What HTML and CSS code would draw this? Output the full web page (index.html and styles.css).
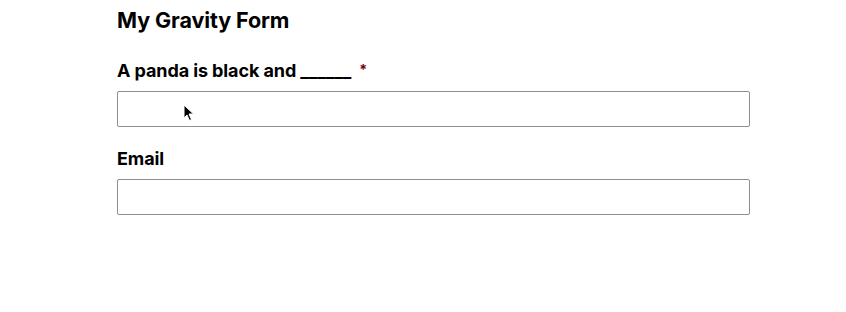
FILE: index.html
```html
<!DOCTYPE html>
<html>
<head>
<meta charset="utf-8">
<link rel="stylesheet" href="styles.css">
</head>
<body>
<div class="page">
  <form class="gform">
    <h2 class="gform-title">My Gravity Form</h2>
    <div class="field">
      <label class="field-label">A panda is black and ______ <span class="req">*</span></label>
      <div class="input-wrap">
        <input class="text-input" type="text">
        <svg class="cursor" width="12" height="18" viewBox="0 0 12 18"><path d="M1 1 L1 14 L4 11 L6.5 16.5 L8.5 15.5 L6 10 L10.5 10 Z" fill="#000" stroke="#fff" stroke-width="1"/></svg>
      </div>
    </div>
    <div class="field">
      <label class="field-label">Email</label>
      <input class="text-input" type="email">
    </div>
  </form>
</div>
</body>
</html>
```
FILE: styles.css
```css
html, body {
  margin: 0;
  padding: 0;
  background: #fff;
}
body {
  font-family: Inter, "Liberation Sans", sans-serif;
  color: #000;
}
.page {
  width: 846px;
  height: 312px;
  padding: 8px 96px 0 117px;
  box-sizing: border-box;
}
.gform {
  display: flex;
  flex-direction: column;
}
.gform-title {
  margin: 0;
  font-size: 21.5px;
  font-weight: 700;
  line-height: 24px;
  letter-spacing: -0.1px;
}
.field {
  display: flex;
  flex-direction: column;
  margin-top: 27px;
}
.field + .field {
  margin-top: 21px;
}
.field-label {
  font-size: 18px;
  font-weight: 700;
  line-height: 22px;
  margin-bottom: 9px;
  letter-spacing: -0.1px;
}
.req {
  color: #790000;
  font-size: 14px;
  margin-left: 4px;
  vertical-align: 2px;
}
.input-wrap {
  position: relative;
}
.text-input {
  display: block;
  width: 100%;
  height: 36px;
  box-sizing: border-box;
  border: 1px solid #8e8e8e;
  border-radius: 2px;
  background: #fff;
  margin: 0;
  padding: 0 8px;
  font: inherit;
}
.cursor {
  position: absolute;
  left: 66px;
  top: 13px;
}
```
